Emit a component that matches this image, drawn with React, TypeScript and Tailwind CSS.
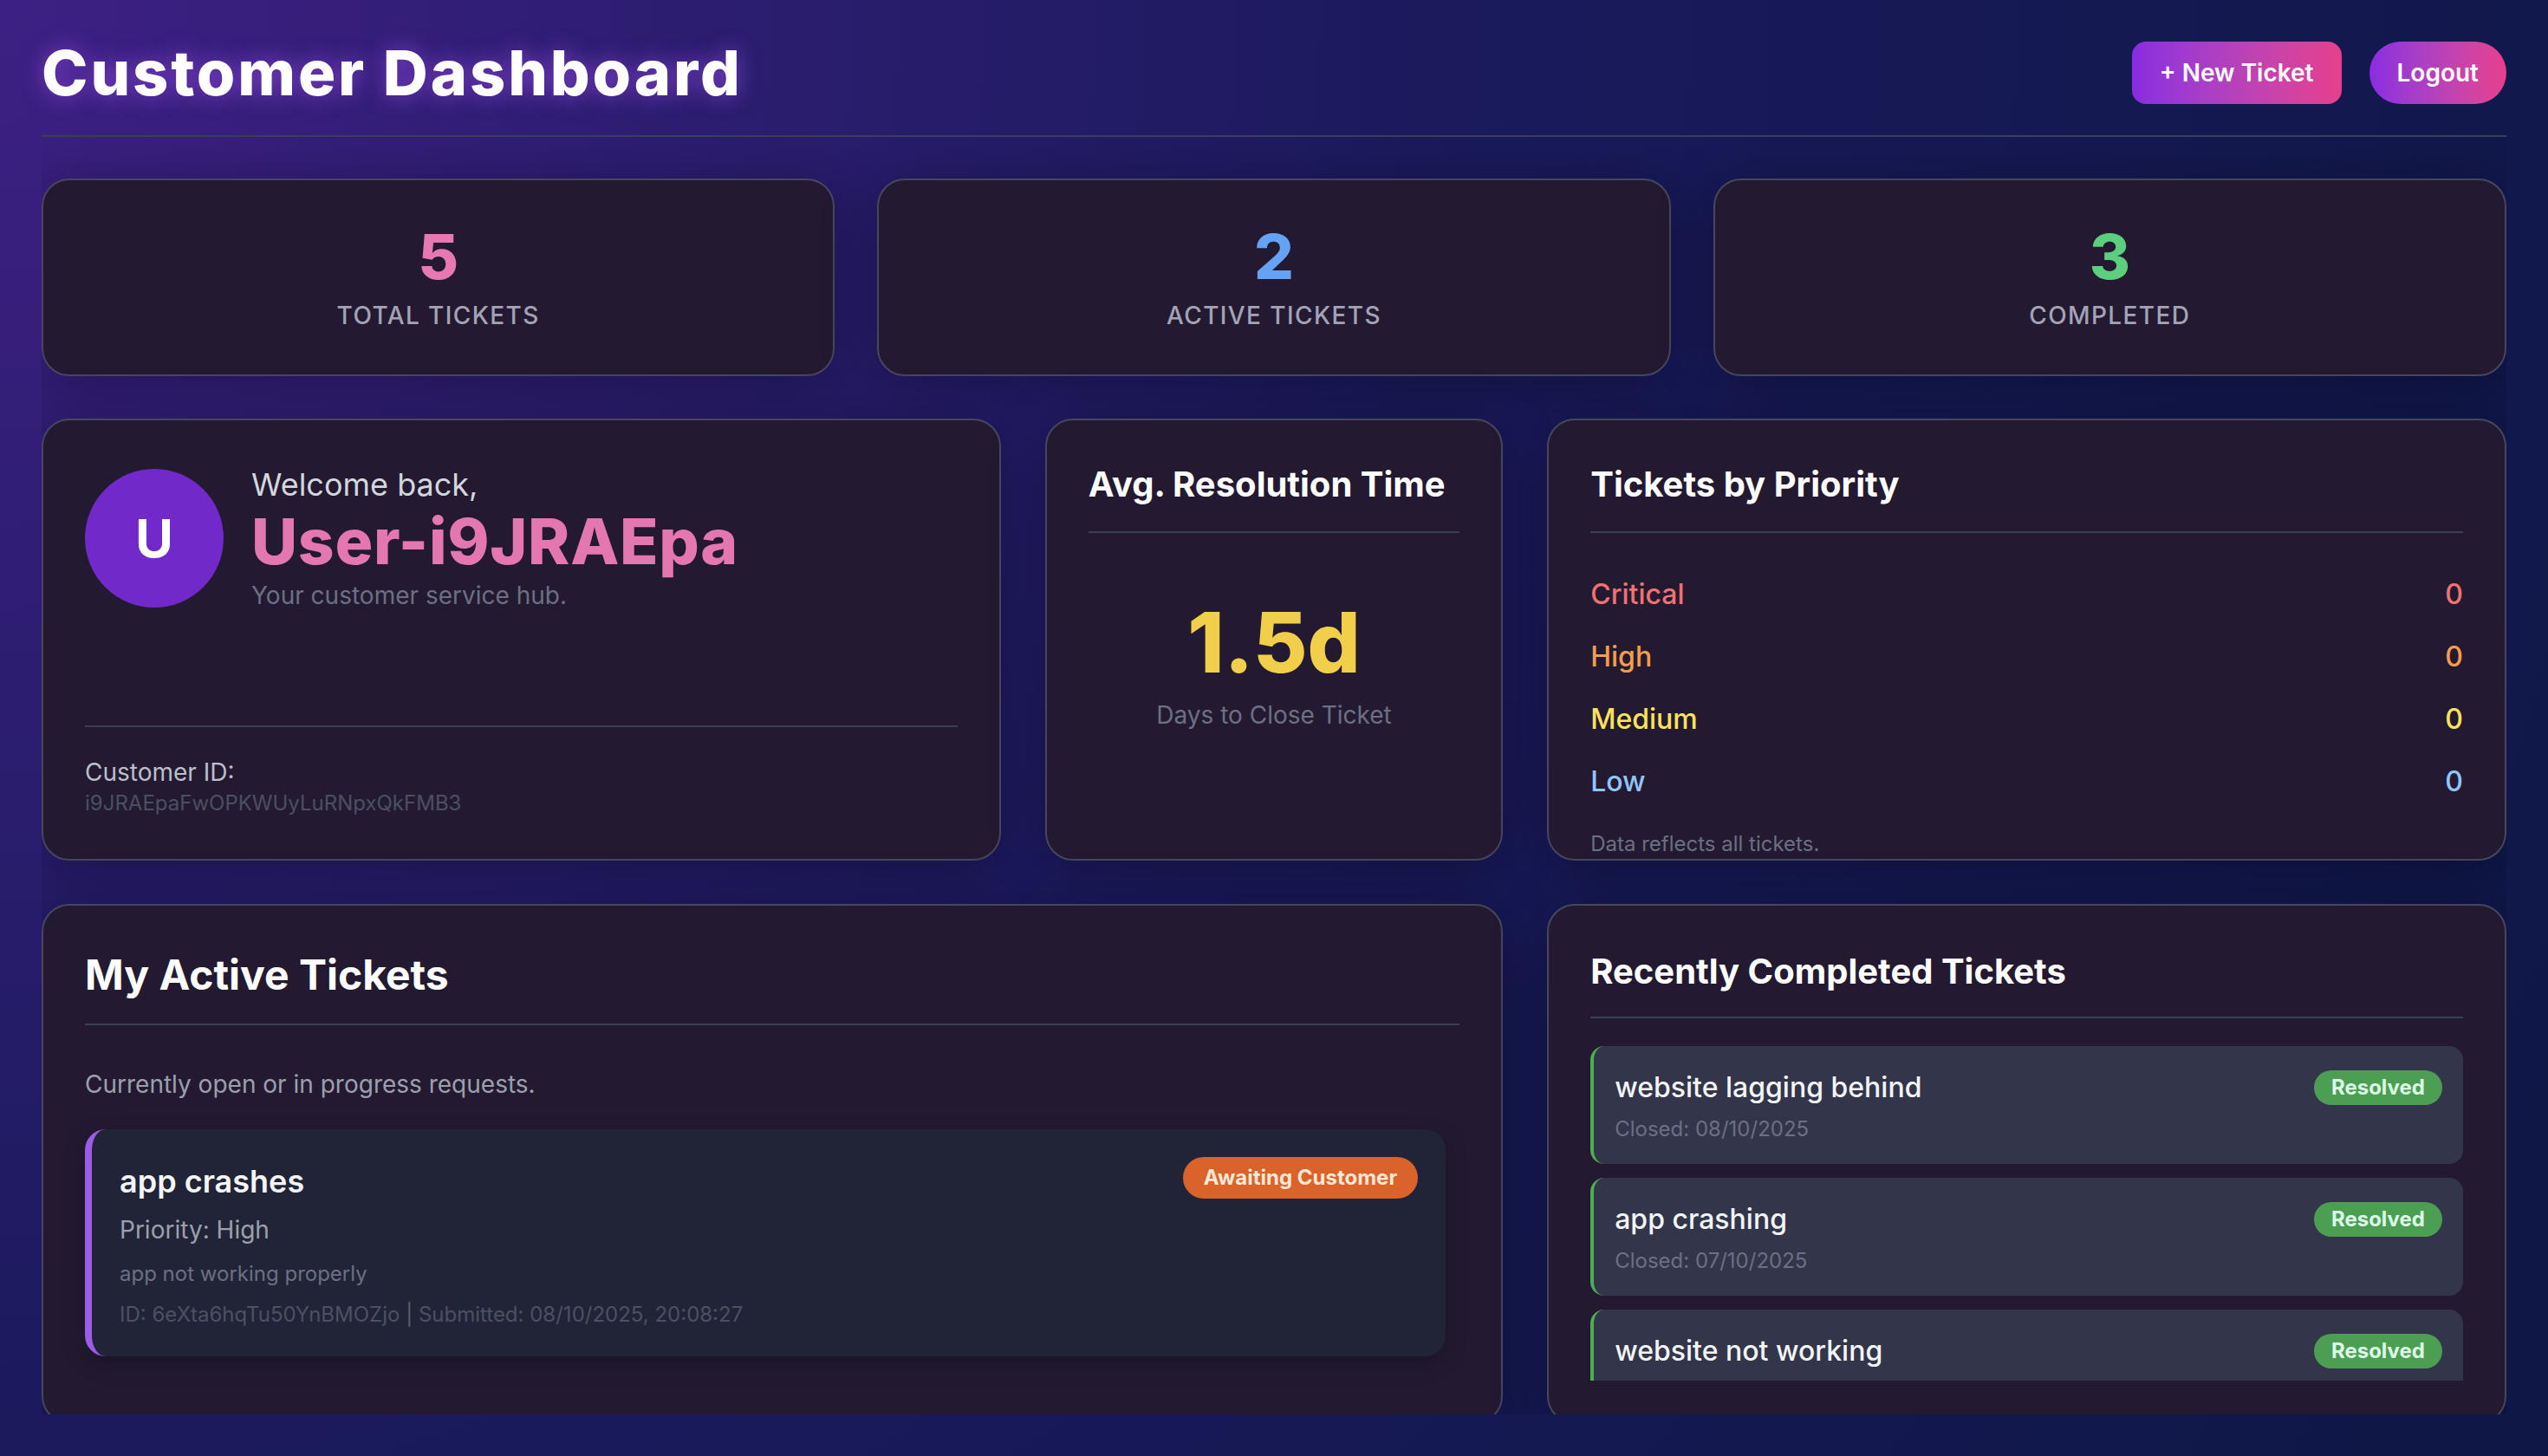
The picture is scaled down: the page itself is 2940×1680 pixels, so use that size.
import React from 'react';

const stats = [
  { value: '5', label: 'TOTAL TICKETS', color: 'text-[#e678b2]' },
  { value: '2', label: 'ACTIVE TICKETS', color: 'text-[#64a2f4]' },
  { value: '3', label: 'COMPLETED', color: 'text-[#5ccf7e]' },
];

const priorities = [
  { name: 'Critical', count: 0, color: 'text-[#f07272]' },
  { name: 'High', count: 0, color: 'text-[#f59d4c]' },
  { name: 'Medium', count: 0, color: 'text-[#fde35a]' },
  { name: 'Low', count: 0, color: 'text-[#93c5fd]' },
];

// last one is cut by the list height, its date never shows
const completed = [
  { title: 'website lagging behind', closed: '08/10/2025' },
  { title: 'app crashing', closed: '07/10/2025' },
  { title: 'website not working', closed: '' },
];

const card =
  'rounded-[32px] border-2 border-[#46465f] bg-[#231a31] shadow-[0_8px_64px_rgba(0,0,0,0.32)]';

export default function App() {
  return (
    <div className="flex h-screen flex-col overflow-hidden bg-[radial-gradient(circle_at_top_left,#3d2083_0%,#1a1a5c_50%,#0e1745_100%)] p-12 font-['Inter',sans-serif] text-white">
      {/* Header */}
      <header className="flex items-center justify-between border-b-2 border-[#3b3f52] pb-[36px]">
        <h1 className="text-[72px] font-extrabold leading-none tracking-[0.04em] [text-shadow:0_0_24px_rgba(168,85,247,0.65)]">
          Customer Dashboard
        </h1>
        <div className="flex items-center gap-8">
          <button
            type="button"
            className="rounded-2xl bg-linear-to-r from-[#8a2be2] to-[#e83e8c] px-8 py-4 text-[28px] font-semibold leading-[40px]"
          >
            + New Ticket
          </button>
          <button
            type="button"
            className="rounded-full bg-linear-to-r from-[#8a2be2] to-[#e83e8c] px-8 py-4 text-[28px] font-semibold leading-[40px]"
          >
            Logout
          </button>
        </div>
      </header>

      <main className="min-h-0 flex-1 overflow-hidden pt-12">
        {/* Stats */}
        <div className="mb-[49px] grid grid-cols-3 gap-[49px]">
          {stats.map((s) => (
            <div key={s.label} className={`${card} px-8 py-12 text-center`}>
              <div className={`text-[72px] font-extrabold leading-[80px] ${s.color}`}>{s.value}</div>
              <div className="mt-2 text-[28px] font-medium leading-[40px] tracking-wider text-[#a3a3b6]">
                {s.label}
              </div>
            </div>
          ))}
        </div>

        <div className="grid grid-cols-[1106fr_528fr_1106fr] gap-x-[51px] gap-y-[50px]">
          {/* Welcome */}
          <div className={`${card} flex h-[510px] flex-col p-12`}>
            <div className="flex items-center gap-8">
              <div className="flex h-[160px] w-[160px] shrink-0 items-center justify-center rounded-full bg-[#7229c9] text-[60px] font-bold">
                U
              </div>
              <div>
                <div className="text-[36px] leading-[52px] text-[#d4d6dd]">Welcome back,</div>
                <div className="text-[73px] font-extrabold leading-[80px] tracking-[0.01em] text-[#e476b0]">
                  User-i9JRAEpa
                </div>
                <div className="text-[28px] leading-[44px] text-[#6b7082]">Your customer service hub.</div>
              </div>
            </div>
            <div className="mt-auto border-t-2 border-[#3b3f52] pt-8">
              <div className="text-[28px] leading-[40px] text-[#bcbfca]">Customer ID:</div>
              <div className="text-[24px] leading-[32px] text-[#4b5060]">i9JRAEpaFwOPKWUyLuRNpxQkFMB3</div>
            </div>
          </div>

          {/* Avg resolution */}
          <div className={`${card} h-[510px] p-12`}>
            <h2 className="border-b-2 border-[#3b3f52] pb-7 text-[40px] font-bold leading-[52px]">
              Avg. Resolution Time
            </h2>
            <div className="pt-[78px] text-center">
              <div className="text-[96px] font-extrabold leading-none text-[#f2cf4a]">1.5d</div>
              <div className="mt-4 text-[28px] leading-[40px] text-[#6b7082]">Days to Close Ticket</div>
            </div>
          </div>

          {/* Priority */}
          <div className={`${card} h-[510px] px-12 pt-12`}>
            <h2 className="border-b-2 border-[#3b3f52] pb-7 text-[40px] font-bold leading-[52px]">
              Tickets by Priority
            </h2>
            <div className="mt-[47px] flex flex-col gap-6">
              {priorities.map((p) => (
                <div key={p.name} className={`flex justify-between text-[32px] font-medium leading-[48px] ${p.color}`}>
                  <span>{p.name}</span>
                  <span>{p.count}</span>
                </div>
              ))}
            </div>
            <div className="mt-[32px] text-[24px] leading-[32px] text-[#6b7082]">Data reflects all tickets.</div>
          </div>

          {/* Active tickets */}
          <div className={`${card} col-span-2 p-12`}>
            <h2 className="border-b-2 border-[#3b3f52] pb-6 text-[48px] font-bold leading-[64px]">
              My Active Tickets
            </h2>
            <p className="mt-[48px] text-[28px] leading-[40px] text-[#9ca0ad]">Currently open or in progress requests.</p>
            <div className="mr-4 mt-8 rounded-3xl border-l-8 border-[#9b5de5] bg-[#212436] p-8 shadow-[0_8px_24px_rgba(0,0,0,0.25)]">
              <div className="flex items-start justify-between">
                <div className="text-[36px] font-semibold leading-[56px] text-[#f5f5f7]">app crashes</div>
                <span className="rounded-full bg-[#d9632b] px-6 py-2 text-[24px] font-bold leading-[32px] text-[#fde8d6]">
                  Awaiting Customer
                </span>
              </div>
              <div className="mt-2 text-[28px] leading-[40px] text-[#9ca0ad]">Priority: High</div>
              <div className="mt-[15px] text-[24px] leading-[32px] text-[#6b7082]">app not working properly</div>
              <div className="mt-[15px] text-[24px] leading-[32px] text-[#4b5162]">
                ID: 6eXta6hqTu50YnBMOZjo <span className="text-[#5a6070]">|</span> Submitted: 08/10/2025, 20:08:27
              </div>
            </div>
          </div>

          {/* Recently completed */}
          <div className={`${card} p-12`}>
            <h2 className="border-b-2 border-[#3b3f52] pb-6 text-[40px] font-bold leading-[56px]">
              Recently Completed Tickets
            </h2>
            <div className="mt-8 flex max-h-[386px] flex-col gap-4 overflow-hidden">
              {completed.map((t) => (
                <div key={t.title} className="h-[136px] shrink-0 rounded-2xl border-l-4 border-[#4caf50] bg-[#33364a] p-6">
                  <div className="flex items-center justify-between">
                    <span className="text-[32px] font-medium leading-[48px] text-[#f3f4f6]">{t.title}</span>
                    <span className="rounded-full bg-[#4c9f52] px-5 py-1 text-[24px] font-bold leading-[32px] text-[#dcfce7]">
                      Resolved
                    </span>
                  </div>
                  {t.closed && (
                    <div className="mt-2 text-[24px] leading-[32px] text-[#6b7082]">Closed: {t.closed}</div>
                  )}
                </div>
              ))}
            </div>
          </div>
        </div>
      </main>
    </div>
  );
}
